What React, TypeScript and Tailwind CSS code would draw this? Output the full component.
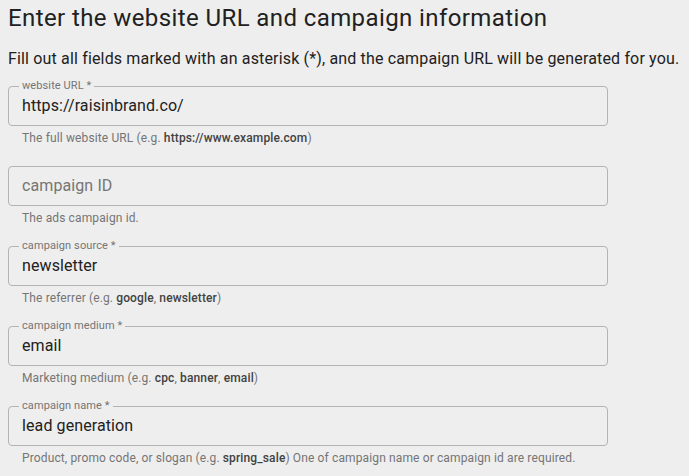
import type { ReactNode } from "react";

type Field = {
  label: string;
  value?: string;
  help: ReactNode;
};

const fields: Field[] = [
  {
    label: "website URL *",
    value: "https://raisinbrand.co/",
    help: (
      <>
        The full website URL (e.g. <b className="font-medium text-[#424242]">https://www.example.com</b>)
      </>
    ),
  },
  {
    label: "campaign ID",
    help: <>The ads campaign id.</>,
  },
  {
    label: "campaign source *",
    value: "newsletter",
    help: (
      <>
        The referrer (e.g. <b className="font-medium text-[#424242]">google</b>,{" "}
        <b className="font-medium text-[#424242]">newsletter</b>)
      </>
    ),
  },
  {
    label: "campaign medium *",
    value: "email",
    help: (
      <>
        Marketing medium (e.g. <b className="font-medium text-[#424242]">cpc</b>,{" "}
        <b className="font-medium text-[#424242]">banner</b>, <b className="font-medium text-[#424242]">email</b>)
      </>
    ),
  },
  {
    label: "campaign name *",
    value: "lead generation",
    help: (
      <>
        Product, promo code, or slogan (e.g. <b className="font-medium text-[#424242]">spring_sale</b>) One of campaign
        name or campaign id are required.
      </>
    ),
  },
];

function OutlinedField({ field }: { field: Field }) {
  const filled = field.value !== undefined;
  return (
    <div className="h-20">
      <div className="relative h-10 w-[600px] rounded-[4px] border border-[#b3b3b3]">
        {filled ? (
          <span className="absolute -top-[8px] left-[10px] bg-[#eeeeee] px-[3px] text-[11px] leading-[14px] tracking-[0.1px] text-[#757575]">
            {field.label}
          </span>
        ) : null}
        <div className="flex h-full items-center px-[13px] text-[16px] leading-5 tracking-[0.1px]">
          {filled ? (
            <span className="text-[#212121]">{field.value}</span>
          ) : (
            <span className="text-[#757575]">{field.label}</span>
          )}
        </div>
      </div>
      <p className="mt-[5px] pl-[14px] text-[12px] leading-[14px] tracking-[0.13px] text-[#757575]">{field.help}</p>
    </div>
  );
}

export default function App() {
  return (
    <div className="min-h-[476px] bg-[#eeeeee] px-2 font-['Roboto',sans-serif]">
      <h1 className="pt-[2px] text-[24px] leading-8 tracking-[0.4px] text-[#212121]">
        Enter the website URL and campaign information
      </h1>
      <p className="mt-[13px] text-[16px] leading-6 tracking-[0.16px] text-[#212121]">
        Fill out all fields marked with an asterisk (*), and the campaign URL will be generated for you.
      </p>
      <div className="mt-[15px]">
        {fields.map((field) => (
          <OutlinedField key={field.label} field={field} />
        ))}
      </div>
    </div>
  );
}
